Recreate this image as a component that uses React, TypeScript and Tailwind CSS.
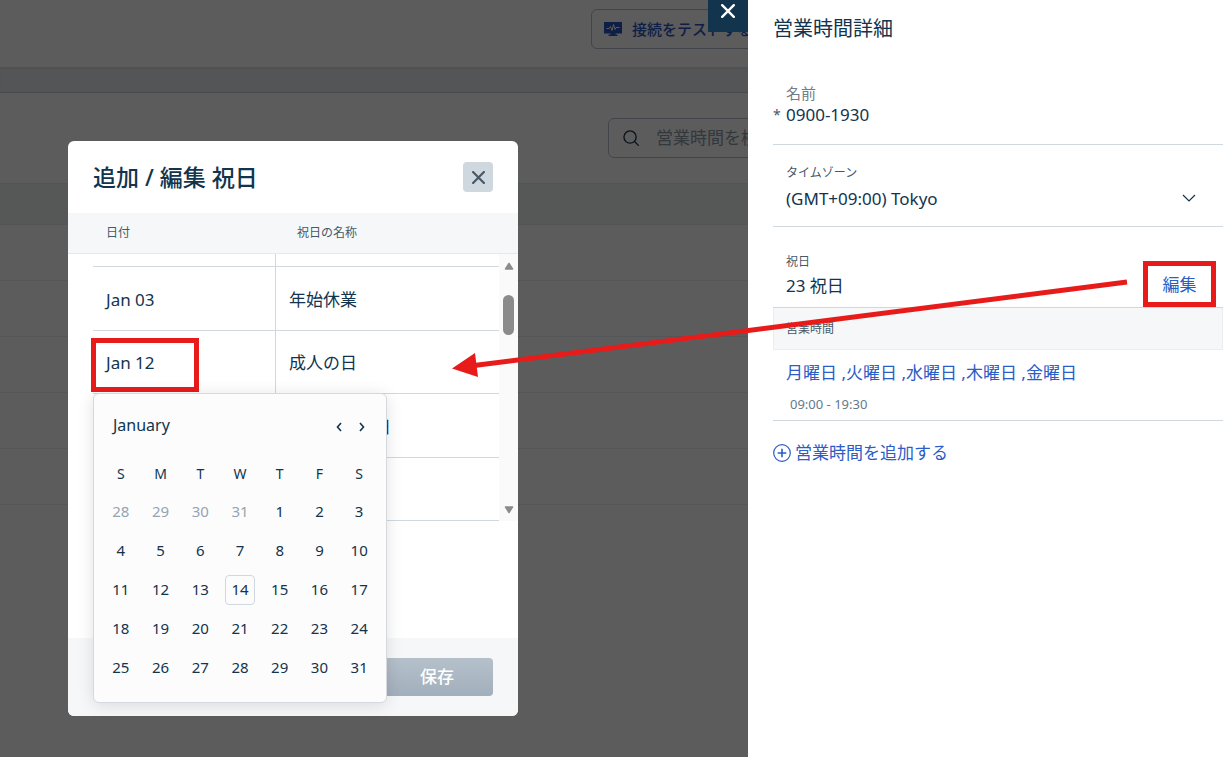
import { useState } from "react";

// the open calendar lies over the later rows
const holidays = [
  { date: "Jan 03", name: "年始休業" },
  { date: "Jan 12", name: "成人の日" },
  { date: "", name: "建国記念の日" },
  { date: "", name: "" },
];

const weekdays = ["S", "M", "T", "W", "T", "F", "S"];
const leadingDays = [28, 29, 30, 31];
const monthDays = Array.from({ length: 31 }, (_, i) => i + 1);

function CloseIcon({ className }: { className: string }) {
  return (
    <svg viewBox="0 0 12 12" className={className} fill="none" stroke="currentColor" strokeLinecap="round">
      <path d="M1 1l10 10M11 1L1 11" />
    </svg>
  );
}

/* the page that sits behind the scrim */
function HoursPage() {
  return (
    <div className="h-full overflow-hidden bg-white">
      <div className="flex h-[67px] items-start pl-[591px] pt-[9px]">
        <button className="flex h-10 shrink-0 items-center gap-2.5 whitespace-nowrap rounded-md border border-[#b4bfca] px-3 text-[15px] font-medium text-[#2a55c4]">
          <svg viewBox="0 0 18 14" className="h-3.5 w-[18px]">
            <path d="M0 0h18v11.500h-6.500v1h2V14h-9v-1.500h2v-1H0z" fill="#2a55c4" />
            <path d="M2.500 6.500H5l1.500-2 1.500 4 1.500-6 1.500 5 1-2h3.500" fill="none" stroke="#fff" strokeWidth="1" />
          </svg>
          接続をテストする
        </button>
      </div>
      <div className="h-[26px] border-b border-[#c6d0da] bg-[#e8ecf1] shadow-[inset_0_2px_2px_rgba(0,0,0,0.06)]" />
      <div className="flex h-[90px] items-start pl-[608px] pt-[25px]">
        <label className="flex h-10 w-80 shrink-0 items-center gap-[17px] rounded-md border border-[#b4bfca] px-3.5">
          <svg viewBox="0 0 17 17" className="h-4 w-4 shrink-0" fill="none" stroke="#12344d" strokeWidth="1.400" strokeLinecap="round">
            <circle cx="7.500" cy="7.500" r="6.500" />
            <path d="M12.300 12.300l4 4" />
          </svg>
          <input aria-label="検索" placeholder="営業時間を検索" className="w-full text-[17px] placeholder:text-[#8d9baa]" />
        </label>
      </div>
      <div className="h-[42px] border-y border-[#e2e8ea] bg-[#eef4f2]" />
      {[1, 2, 3, 4, 5].map((row) => (
        <div key={row} className="h-14 border-b border-[#e6eaed]" />
      ))}
    </div>
  );
}

function Calendar() {
  return (
    <div className="absolute left-[25px] top-[252px] h-[310px] w-[294px] rounded-md border border-[#d5d9dd] bg-[#fcfcfc] px-[7px] text-[15px] shadow-[0_2px_16px_rgba(0,0,0,0.12)]">
      <div className="flex h-[62px] items-center justify-between pl-3 pr-3.5">
        <span className="text-base">January</span>
        <div className="flex gap-[17px] pt-1">
          <button aria-label="前の月">
            <svg viewBox="0 0 6 10" className="h-2.5 w-1.5" fill="none" stroke="currentColor" strokeWidth="1.600">
              <path d="M5 1L1.500 5L5 9" />
            </svg>
          </button>
          <button aria-label="次の月">
            <svg viewBox="0 0 6 10" className="h-2.5 w-1.5" fill="none" stroke="currentColor" strokeWidth="1.600">
              <path d="M1 1l3.500 4L1 9" />
            </svg>
          </button>
        </div>
      </div>
      <div className="grid grid-cols-7 text-center">
        {weekdays.map((day, i) => (
          <span key={i} className="flex h-9 items-center justify-center text-sm">{day}</span>
        ))}
        {leadingDays.map((day) => (
          <button key={`prev-${day}`} className="h-[39px] text-[#95a4b3]">{day}</button>
        ))}
        {monthDays.map((day) => (
          <button key={day} className="flex h-[39px] items-center justify-center">
            <span className={day === 14 ? "flex h-[30px] w-[30px] items-center justify-center rounded-sm border border-[#cfd7df]" : ""}>
              {day}
            </span>
          </button>
        ))}
      </div>
    </div>
  );
}

function HolidayDialog() {
  return (
    <div role="dialog" className="relative flex h-[575px] w-[450px] flex-col rounded-md bg-white text-[#12344d]">
      <div className="flex h-[72px] items-center justify-between px-[25px]">
        <h2 className="text-[23px] font-medium">追加 / 編集 祝日</h2>
        <button aria-label="閉じる" className="flex h-[30px] w-[30px] items-center justify-center rounded bg-[#cfd7df] text-[#475867]">
          <CloseIcon className="h-[13px] w-[13px] stroke-2" />
        </button>
      </div>

      <div className="relative">
        <table className="block text-left">
          <thead className="block border-b border-[#e6e9ec] bg-[#f5f7f9] px-[25px]">
            <tr className="flex h-10 items-center text-xs text-[#475867]">
              <th className="w-[191px] pl-[13px] font-normal">日付</th>
              <th className="pl-[13px] font-normal">祝日の名称</th>
            </tr>
          </thead>
          <tbody className="ml-[25px] mr-[19px] block text-[17px]">
            <tr className="flex h-[13px] border-b border-[#cfd7df]">
              <td className="w-[183px] border-r border-[#cfd7df]" />
              <td />
            </tr>
            {holidays.map((holiday, i) => (
              <tr key={i} className="flex border-b border-[#cfd7df] odd:h-[63px] even:h-16">
                <td className="flex w-[183px] items-center border-r border-[#cfd7df] pl-[13px] pt-0.5">{holiday.date}</td>
                <td className="flex items-center pl-[13px] pt-0.5">{holiday.name}</td>
              </tr>
            ))}
          </tbody>
        </table>

        {/* scrollbar */}
        <div className="absolute bottom-0 right-0 top-[41px] flex w-[19px] flex-col items-center bg-[#fafafa] text-[#8b8b8b]">
          <svg viewBox="0 0 10 8" className="mt-2 h-2 w-2.5 shrink-0" fill="currentColor">
            <path d="M5 1.500L8.500 7H1.500z" stroke="currentColor" strokeWidth="1.500" strokeLinejoin="round" />
          </svg>
          <span className="mt-[25px] h-10 w-[11px] rounded-full bg-[#8b8b8b]" />
          <svg viewBox="0 0 10 8" className="mb-[7px] mt-auto h-2 w-2.5 shrink-0" fill="currentColor">
            <path d="M5 6.500L8.500 1H1.500z" stroke="currentColor" strokeWidth="1.500" strokeLinejoin="round" />
          </svg>
        </div>

        {/* highlight round the selected date */}
        <div className="absolute left-[23px] top-[125px] h-[54px] w-[108px] border-[5px] border-[#e81b1b]" />
      </div>

      <div className="mt-auto flex h-[78px] items-center justify-end rounded-b-md bg-[#f5f7f9] px-[25px]">
        <button className="h-[38px] w-28 rounded bg-gradient-to-b from-[#b5c0ca] to-[#a2afbc] text-[17px] font-medium text-white">保存</button>
      </div>

      <Calendar />
    </div>
  );
}

function HoursDetails() {
  const [name, setName] = useState("0900-1930");
  return (
    <aside className="w-[483px] shrink-0 bg-white pl-[25px] pr-2 text-[#12344d]">
      <h1 className="pt-[15px] text-xl leading-7">営業時間詳細</h1>

      <div className="mt-[38px] flex h-16 flex-col border-b border-[#cfd7df]">
        <label htmlFor="name" className="pl-[13px] text-[15px] leading-6 text-[#6f7c8a]">名前</label>
        <div className="flex h-5 items-center">
          <span className="w-[13px] text-sm text-[#475867]">*</span>
          <input id="name" value={name} onChange={(e) => setName(e.target.value)} className="min-w-0 flex-1 text-[17px] leading-5" />
        </div>
      </div>

      <div className="relative h-[82px] border-b border-[#cfd7df] pl-[13px] pt-[18px]">
        <label htmlFor="timezone" className="block text-xs leading-5 text-[#475867]">タイムゾーン</label>
        <select id="timezone" className="mt-1 w-full appearance-none text-[17px] leading-6">
          <option>(GMT+09:00) Tokyo</option>
        </select>
        <svg viewBox="0 0 14 8" className="pointer-events-none absolute bottom-6 right-[27px] h-2 w-3.5" fill="none" stroke="currentColor" strokeWidth="1.200">
          <path d="M1 1l6 6 6-6" />
        </svg>
      </div>

      <div className="flex h-[81px] items-end justify-between border-b border-[#cfd7df] pl-[13px]">
        <div className="pb-[9px]">
          <p className="text-xs leading-5 text-[#475867]">祝日</p>
          <p className="pt-0.5 text-[17px] leading-6">23 祝日</p>
        </div>
        <button className="mr-[7px] h-[46px] w-[73px] border-[5px] border-[#e81b1b] pt-0.5 text-[17px] text-[#2c5cc5]">編集</button>
      </div>

      <div className="flex h-[42px] items-center border border-t-0 border-[#ebeef1] bg-[#f5f7f9] pl-3 text-xs text-[#475867]">営業時間</div>

      <div className="h-[71px] border-b border-[#cfd7df] pl-[13px] pt-[9px]">
        <a href="#" className="block text-[17px] leading-7 text-[#2c5cc5]">月曜日 ,火曜日 ,水曜日 ,木曜日 ,金曜日</a>
        <p className="pl-1 pt-[7px] text-[13px] leading-5 text-[#647a8e]">09:00 - 19:30</p>
      </div>

      <button className="mt-[18px] flex items-center gap-1 text-[17px] leading-7 text-[#2c5cc5]">
        <svg viewBox="0 0 18 18" className="h-[18px] w-[18px]" fill="none" stroke="currentColor">
          <circle cx="9" cy="9" r="8.300" strokeWidth="1.200" />
          <path d="M9 4.700v8.600M4.700 9h8.600" strokeWidth="1.600" />
        </svg>
        営業時間を追加する
      </button>
    </aside>
  );
}

export default function App() {
  return (
    <div className="relative flex min-h-screen font-['Noto_Sans','Noto_Sans_CJK_JP',sans-serif]">
      <main className="relative min-w-0 flex-1 overflow-hidden">
        <HoursPage />
        <div className="absolute inset-0 bg-black/64 pl-[68px] pt-[141px]">
          <HolidayDialog />
        </div>
        <button aria-label="パネルを閉じる" className="absolute right-0 top-0 flex h-8 w-10 justify-center bg-[#12344d] pt-1 text-white">
          <CloseIcon className="h-3.5 w-3.5 stroke-2" />
        </button>
      </main>
      <HoursDetails />

      {/* arrow from the edit button to the selected holiday */}
      <svg viewBox="0 0 676 100" className="pointer-events-none absolute left-[452px] top-[278px] h-[100px] w-[676px]">
        <path d="M675 4L22 87.500" stroke="#e81b1b" strokeWidth="5" />
        <path d="M0 90.500L23 75L26 99z" fill="#e81b1b" />
      </svg>
    </div>
  );
}
